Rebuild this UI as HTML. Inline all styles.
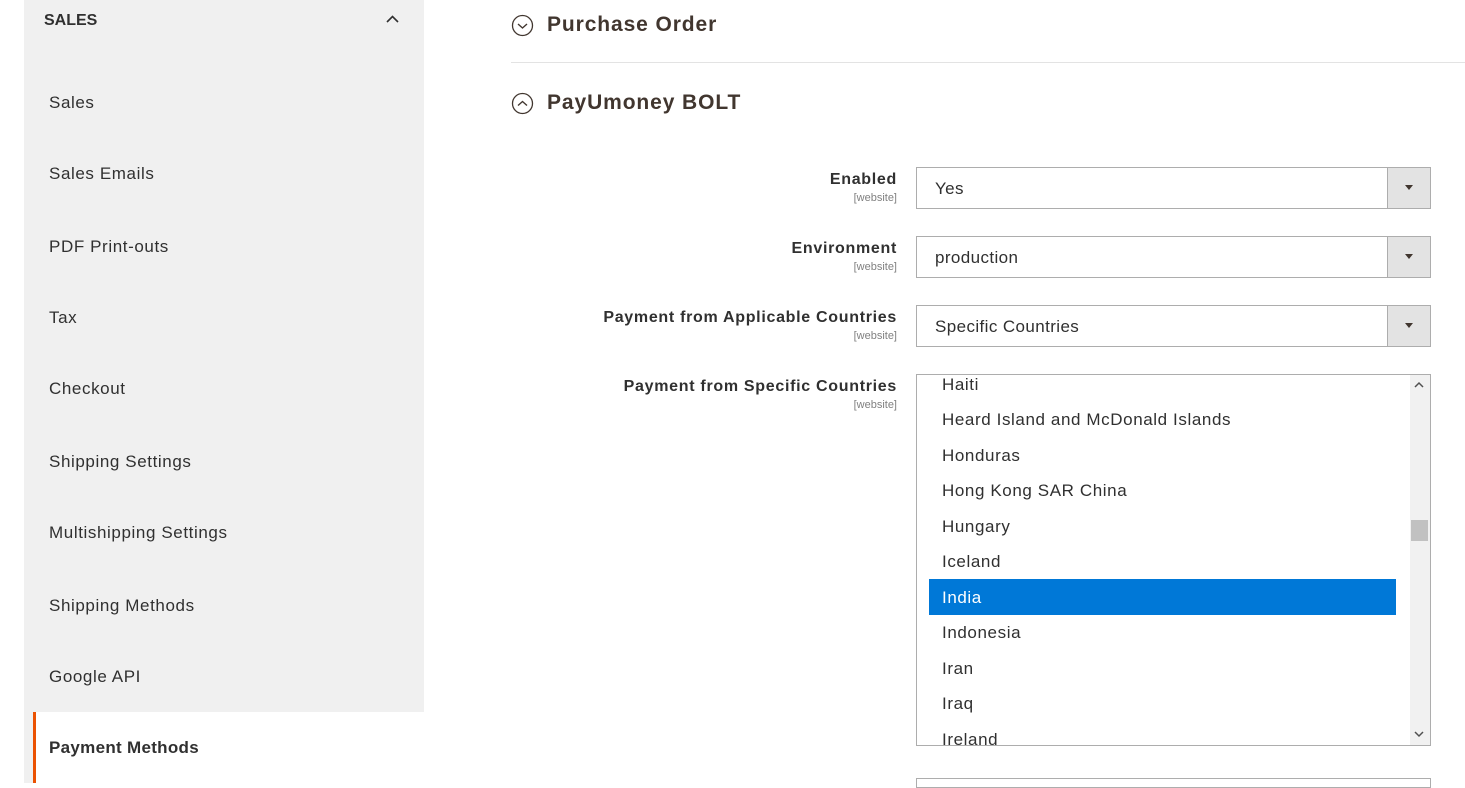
<!DOCTYPE html>
<html><head><meta charset="utf-8"><style>
*{margin:0;padding:0;box-sizing:border-box}
body{width:1465px;height:783px;overflow:hidden;background:#fff;font-family:"Liberation Sans",sans-serif;color:#303030;position:relative}
.a{position:absolute;white-space:nowrap}
.side{position:absolute;left:24px;top:0;width:400px;height:783px;background:#f0f0f0}
.nav{font-size:17px;color:#303030;left:49px;letter-spacing:0.6px}
.lbl{font-size:16px;font-weight:bold;color:#303030;text-align:right;right:568px;letter-spacing:0.7px}
.sc{font-size:11px;color:#808080;text-align:right;right:568px}
.sel{position:absolute;left:916px;width:515px;height:42px;border:1px solid #adadad;background:#fff;font-size:17px;padding:11px 0 0 18px;letter-spacing:0.4px}
.sel .btn{position:absolute;right:0;top:0;width:43px;height:40px;background:#e3e3e3;border-left:1px solid #adadad}
.sel .btn:after{content:"";position:absolute;left:17px;top:17px;border:4px solid transparent;border-top:5px solid #41362f}
.li{left:942px;font-size:17px;color:#303030;letter-spacing:0.6px}
</style></head><body>
<div class="side"></div>
<div class="a" style="left:33px;top:712px;width:391px;height:71px;background:#fff;border-left:3px solid #eb5202"></div>
<div class="a" style="left:44px;top:12px;font-size:16px;font-weight:bold;color:#303030">SALES</div>
<svg class="a" style="left:385px;top:14px" width="15" height="10"><path d="M2 8 L7.5 2.5 L13 8" stroke="#303030" stroke-width="1.6" fill="none"/></svg>
<div class="a nav" style="top:93px">Sales</div>
<div class="a nav" style="top:164px">Sales Emails</div>
<div class="a nav" style="top:237px">PDF Print-outs</div>
<div class="a nav" style="top:308px">Tax</div>
<div class="a nav" style="top:379px">Checkout</div>
<div class="a nav" style="top:452px">Shipping Settings</div>
<div class="a nav" style="top:523px">Multishipping Settings</div>
<div class="a nav" style="top:596px">Shipping Methods</div>
<div class="a nav" style="top:667px">Google API</div>
<div class="a nav" style="top:738px;font-weight:bold;letter-spacing:0.3px">Payment Methods</div>

<svg class="a" style="left:511px;top:14px" width="24" height="24"><circle cx="11.5" cy="11.5" r="10" stroke="#41362f" stroke-width="1.3" fill="none"/><path d="M7 10 L11.5 14 L16 10" stroke="#41362f" stroke-width="1.4" fill="none"/></svg>
<div class="a" style="left:547px;top:13px;font-size:21px;font-weight:bold;color:#41362f;letter-spacing:0.9px">Purchase Order</div>
<div class="a" style="left:511px;top:62px;width:954px;height:1px;background:#e3e3e3"></div>
<svg class="a" style="left:511px;top:92px" width="24" height="24"><circle cx="11.5" cy="11.5" r="10" stroke="#41362f" stroke-width="1.3" fill="none"/><path d="M7 13.5 L11.5 9.5 L16 13.5" stroke="#41362f" stroke-width="1.4" fill="none"/></svg>
<div class="a" style="left:547px;top:91px;font-size:21px;font-weight:bold;color:#41362f;letter-spacing:0.9px">PayUmoney BOLT</div>

<div class="a lbl" style="top:171px">Enabled</div><div class="a sc" style="top:192px">[website]</div>
<div class="sel" style="top:167px">Yes<div class="btn"></div></div>
<div class="a lbl" style="top:240px">Environment</div><div class="a sc" style="top:261px">[website]</div>
<div class="sel" style="top:236px">production<div class="btn"></div></div>
<div class="a lbl" style="top:309px">Payment from Applicable Countries</div><div class="a sc" style="top:330px">[website]</div>
<div class="sel" style="top:305px">Specific Countries<div class="btn"></div></div>
<div class="a lbl" style="top:378px">Payment from Specific Countries</div><div class="a sc" style="top:399px">[website]</div>

<div class="a" style="left:916px;top:374px;width:515px;height:372px;border:1px solid #adadad;overflow:hidden;background:#fff">
<div class="a" style="right:0;top:0;width:20px;height:372px;background:#f1f1f1"></div>
<div class="a" style="right:2px;top:145px;width:17px;height:21px;background:#c1c1c1"></div>
<svg class="a" style="right:5px;top:6px" width="12" height="8"><path d="M2 6 L6 2 L10 6" stroke="#505050" stroke-width="1.5" fill="none"/></svg>
<svg class="a" style="right:5px;top:355px" width="12" height="8"><path d="M2 2 L6 6 L10 2" stroke="#505050" stroke-width="1.5" fill="none"/></svg>
<div class="a" style="left:12px;top:204px;width:467px;height:36px;background:#0078d7"></div>
</div>
<div class="a li" style="top:375px">Haiti</div>
<div class="a li" style="top:410px">Heard Island and McDonald Islands</div>
<div class="a li" style="top:446px">Honduras</div>
<div class="a li" style="top:481px">Hong Kong SAR China</div>
<div class="a li" style="top:517px">Hungary</div>
<div class="a li" style="top:552px">Iceland</div>
<div class="a li" style="top:588px;color:#fff">India</div>
<div class="a li" style="top:623px">Indonesia</div>
<div class="a li" style="top:659px">Iran</div>
<div class="a li" style="top:694px">Iraq</div>
<div class="a" style="left:917px;top:375px;width:480px;height:370px;overflow:hidden"><div class="a li" style="left:25px;top:355px">Ireland</div></div>
<div class="a" style="left:916px;top:778px;width:515px;height:10px;border:1px solid #adadad"></div>
</body></html>
